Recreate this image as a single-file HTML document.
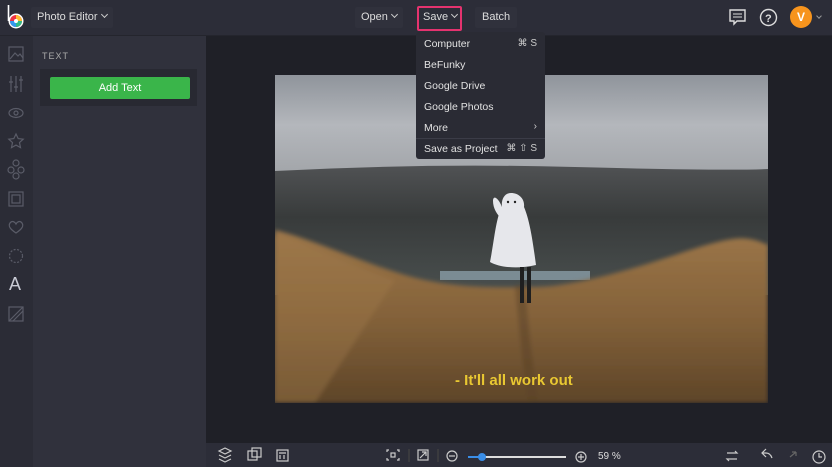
<!DOCTYPE html>
<html><head><meta charset="utf-8"><style>
*{margin:0;padding:0;box-sizing:border-box}
body{width:832px;height:467px;overflow:hidden;background:#1f2027;font-family:"Liberation Sans",sans-serif;position:relative;color:#ddd}
.top{position:absolute;left:0;top:0;width:832px;height:36px;background:#2c2d38;border-bottom:1px solid #24252d}
.side{position:absolute;left:0;top:36px;width:33px;height:431px;background:#2b2c36}
.panel{position:absolute;left:33px;top:36px;width:173px;height:431px;background:#30313c}
.btm{position:absolute;left:206px;top:443px;width:626px;height:24px;background:#2c2d38}
.t{position:absolute;font-size:11px;color:#ddd}
.chev{display:inline-block;width:5px;height:5px;border-right:1.2px solid #ccc;border-bottom:1.2px solid #ccc;transform:rotate(45deg);margin-left:4px;position:relative;top:-3px}
.menu{position:absolute;left:416px;top:32px;width:129px;height:127px;background:#2a2b34;border-radius:3px}
.menu div{position:absolute;left:8px;font-size:10.5px;color:#e2e2e2}
.menu span{position:absolute;right:8px;font-size:10px;color:#ccc}
.photo{position:absolute;left:275px;top:75px;width:493px;height:328px;overflow:hidden}
</style></head><body>
<div class="top"></div>
<svg style="position:absolute;left:6px;top:4px" width="20" height="26" viewBox="0 0 20 26"><line x1="2.5" y1="1" x2="2.5" y2="17" stroke="#fff" stroke-width="1.6"/><circle cx="10" cy="17" r="7.5" fill="#fff"/><circle cx="10" cy="17" r="6" fill="#e34"/><path d="M10 17 L10 11 A6 6 0 0 1 16 17Z" fill="#fb3"/><path d="M10 17 L16 17 A6 6 0 0 1 10 23Z" fill="#3b8"/><path d="M10 17 L10 23 A6 6 0 0 1 4 17Z" fill="#39e"/><circle cx="10" cy="17" r="2" fill="#fff"/></svg>
<div style="position:absolute;left:31px;top:7px;width:82px;height:21px;background:#30313c;border-radius:2px"></div>
<div class="t" style="left:37px;top:11px">Photo Editor<i class="chev"></i></div>
<div style="position:absolute;left:355px;top:7px;width:48px;height:21px;background:#30313c;border-radius:2px"></div>
<div class="t" style="left:361px;top:11px">Open<i class="chev"></i></div>
<div style="position:absolute;left:417px;top:6px;width:45px;height:25px;border:2px solid #e5336f;border-radius:2px"></div>
<div class="t" style="left:423px;top:11px">Save<i class="chev"></i></div>
<div style="position:absolute;left:475px;top:7px;width:42px;height:21px;background:#30313c;border-radius:2px"></div>
<div class="t" style="left:482px;top:11px">Batch</div>
<svg style="position:absolute;left:728px;top:8px" width="20" height="20"><path d="M2 2h15v11H9l-3 3v-3H2z" fill="none" stroke="#ddd" stroke-width="1.4"/><path d="M5 6h9M5 9h9" stroke="#ddd"/></svg>
<svg style="position:absolute;left:759px;top:8px" width="19" height="19"><circle cx="9.5" cy="9.5" r="8" fill="none" stroke="#ddd" stroke-width="1.4"/><text x="6" y="14" font-size="11" fill="#ddd" font-family="Liberation Sans" font-weight="bold">?</text></svg>
<div style="position:absolute;left:790px;top:6px;width:22px;height:22px;border-radius:50%;background:#f7941d;color:#fff;font-size:12px;text-align:center;line-height:22px;font-weight:bold">V</div>
<i class="chev" style="position:absolute;left:813px;top:14px;width:4px;height:4px;border-color:#999"></i>
<div class="side"></div>
<svg style="position:absolute;left:0;top:36px" width="33" height="300" fill="none" stroke="#5a5c68" stroke-width="1.2">
<rect x="9" y="11" width="14" height="14"/><path d="M10 23l5-6 3 3 2-2 3 4"/>
<path d="M11 40v16 M16 40v16 M21 40v16 M9 46h4 M14 51h4 M19 44h4"/>
<ellipse cx="16" cy="77" rx="7" ry="4.5"/><circle cx="16" cy="77" r="2"/>
<path d="M16 98l2.2 4.6 5 .6-3.7 3.4 1 5-4.5-2.5-4.5 2.5 1-5-3.7-3.4 5-.6z"/>
<circle cx="16" cy="127" r="3"/><circle cx="11" cy="134" r="3"/><circle cx="21" cy="134" r="3"/><circle cx="16" cy="140" r="3"/>
<rect x="9" y="156" width="14" height="14"/><rect x="12" y="159" width="8" height="8"/>
<path d="M16 197c-6-4-8-7-6-10s5-1 6 1c1-2 4-4 6-1s0 6-6 10z"/>
<circle cx="16" cy="220" r="6.5" stroke-dasharray="2 1.5"/>
<rect x="9" y="271" width="14" height="14"/><path d="M9 285l14-14 M13 285l10-10"/>
</svg>
<div class="t" style="left:9px;top:274px;font-size:18px;color:#c8cad4">A</div>
<div class="panel"></div>
<div class="t" style="left:42px;top:51px;font-size:9px;letter-spacing:1px;color:#aaa">TEXT</div>
<div style="position:absolute;left:40px;top:69px;width:157px;height:37px;background:#282932"></div>
<div style="position:absolute;left:50px;top:77px;width:140px;height:22px;background:#3ab54a;border-radius:2px;color:#fff;font-size:11px;text-align:center;line-height:22px">Add Text</div>
<div class="photo">
<svg width="493" height="328" viewBox="0 0 493 328">
<defs>
<linearGradient id="sky" x1="0" y1="0" x2="0" y2="1"><stop offset="0" stop-color="#8f949b"/><stop offset=".5" stop-color="#b4b7bc"/><stop offset="1" stop-color="#a2a5a9"/></linearGradient>
<linearGradient id="hill" x1="0" y1="0" x2="0" y2="1"><stop offset="0" stop-color="#505254"/><stop offset=".4" stop-color="#383b3b"/><stop offset="1" stop-color="#4a504f"/></linearGradient>
<linearGradient id="gr" x1="0" y1="0" x2="0" y2="1"><stop offset="0" stop-color="#9c7649"/><stop offset=".5" stop-color="#84623a"/><stop offset="1" stop-color="#5e4528"/></linearGradient>
<filter id="b"><feGaussianBlur stdDeviation="2"/></filter>
</defs>
<rect width="493" height="100" fill="url(#sky)"/>
<path d="M0 96 Q150 88 300 92 T493 94 V220 H0Z" fill="url(#hill)"/>
<rect x="165" y="196" width="150" height="9" fill="#7b8c94"/>
<g filter="url(#b)">
<path d="M0 155 C40 165 80 185 130 200 S230 212 260 212 S340 200 400 180 S470 160 493 170 V328 H0Z" fill="url(#gr)"/>
<path d="M-5 160 C40 170 70 190 120 205 L40 328 H-5Z" fill="#a07a4a" opacity=".4"/>
<path d="M245 210 Q250 270 258 328" stroke="#5a4228" stroke-width="10" fill="none" opacity=".5"/>
</g>
<path d="M236 118c-7 0-10 7-9 14-6 10-8 35-12 55 10 6 30 7 46 3-3-22-6-44-12-58 1-8-5-14-13-14z M227 132c-4-10-9-12-9-6 0 7 4 14 9 18z" fill="#e6e7eb"/>
<rect x="245" y="192" width="4" height="36" fill="#1f1f1f"/><rect x="252" y="192" width="4" height="36" fill="#1f1f1f"/>
<circle cx="233" cy="127" r="1.2" fill="#222"/><circle cx="240" cy="127" r="1.2" fill="#222"/>
</svg>
<div style="position:absolute;left:180px;top:297px;font-size:15px;font-weight:bold;color:#e9c832">- It'll all work out</div>
</div>
<div class="menu">
<div style="top:6px">Computer</div><span style="top:6px">⌘ S</span>
<div style="top:27px">BeFunky</div>
<div style="top:48px">Google Drive</div>
<div style="top:69px">Google Photos</div>
<div style="top:90px">More</div><span style="top:89px">›</span>
<div style="position:absolute;left:0;top:106px;width:129px;height:1px;background:#3b3c47"></div>
<div style="top:111px">Save as Project</div><span style="top:111px">⌘ ⇧ S</span>
</div>
<div class="btm"></div>
<svg style="position:absolute;left:206px;top:443px" width="626" height="24" fill="none" stroke="#ccc" stroke-width="1.2">
<path d="M13 8l6-3 6 3-6 3z M13 12l6 3 6-3 M13 16l6 3 6-3"/>
<rect x="42" y="8" width="9" height="9"/><rect x="46" y="5" width="9" height="9"/>
<rect x="71" y="7" width="11" height="11"/><path d="M73 10h7 M74 12v4 M78 12v4"/>
<path d="M183 7h-2v2 M191 7h2v2 M183 17h-2v-2 M191 17h2v-2"/><rect x="185" y="10" width="4" height="4"/>
<path d="M203 6v13" stroke="#444"/>
<rect x="212" y="7" width="10" height="10"/><path d="M214 15l6-6 M216 9h4v4"/>
<path d="M232 6v13" stroke="#444"/>
<circle cx="246" cy="13" r="5"/><path d="M243 13h6"/>
<line x1="262" y1="14" x2="360" y2="14" stroke="#ddd" stroke-width="2"/>
<line x1="262" y1="14" x2="276" y2="14" stroke="#3a8ee8" stroke-width="2"/>
<circle cx="276" cy="14" r="4" fill="#3a8ee8" stroke="none"/>
<circle cx="375" cy="14" r="5"/><path d="M372 14h6 M375 11v6"/>
<path d="M521 10h10l-2-2 M531 16h-10l2 2"/>
<path d="M560 10l-4 4 4 4 M556 14h4c3 0 5 2 6 5" transform="translate(0,-4)"/>
<path d="M584 14l6-5 M590 9h-4 M590 9v4" stroke="#666"/>
<circle cx="613" cy="14" r="6"/><path d="M613 10v4h3"/>
</svg>
<div class="t" style="left:598px;top:451px;font-size:10px">59 %</div>
</body></html>
